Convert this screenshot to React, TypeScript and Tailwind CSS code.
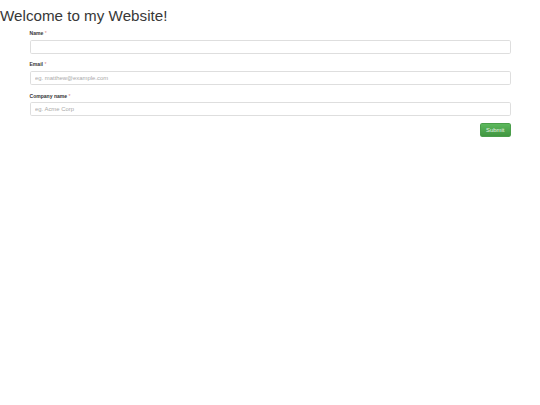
import React from "react";

function Field({ label, placeholder }: { label: string; placeholder?: string }) {
  return (
    <div className="mb-[6.33px]">
      <label className="block mb-[2.1px] text-[5.06px] leading-[8.4px] font-bold text-[#333]">
        {label} <span className="text-[#e08a88] font-normal">*</span>
      </label>
      <input
        type="text"
        placeholder={placeholder}
        className="block w-full h-[14.35px] px-[4.5px] py-0 text-[5.9px] leading-[8.4px] text-[#555] bg-white border border-[#dedede] rounded-[1.7px] placeholder:text-[#aaa] outline-none"
      />
    </div>
  );
}

export default function App() {
  return (
    <div className="min-h-[405px] w-[540px] bg-white text-[#333] text-[5.9px] leading-[8.4px]" style={{ fontFamily: '"Liberation Sans", Arial, sans-serif' }}>
      <h1 className="pt-[8.4px] mb-[4.2px] text-[15.2px] leading-[16.7px] font-normal text-[#383838]">
        Welcome to my Website!
      </h1>
      <div className="w-[481px] mx-auto">
        <Field label="Name" />
        <Field label="Email" placeholder="eg. matthew@example.com" />
        <Field label="Company name" placeholder="eg. Acme Corp" />
        <div className="flex justify-end">
          <button className="h-[14.35px] px-[5.06px] text-[5.9px] leading-[8.4px] text-[#e8f5e8] border border-[#4a9e4a] rounded-[1.7px] bg-[linear-gradient(to_bottom,#5cb85c_0%,#419641_100%)]">
            Submit
          </button>
        </div>
      </div>
    </div>
  );
}
